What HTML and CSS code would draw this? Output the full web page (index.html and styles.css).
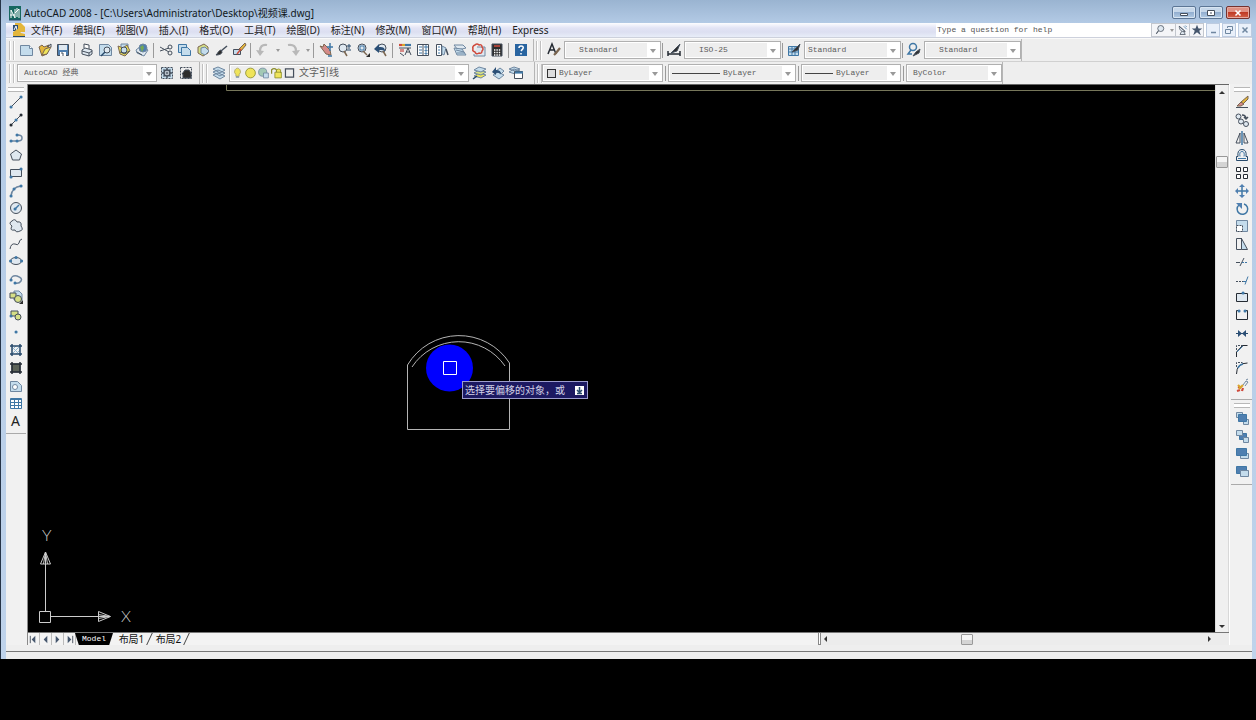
FILE: index.html
```html
<!DOCTYPE html>
<html lang="zh-CN">
<head>
<meta charset="utf-8">
<title>AutoCAD 2008</title>
<link rel="stylesheet" href="styles.css">
</head>
<body>
<div class="window">
  <header class="titlebar">
    <svg class="icon logo" viewBox="0 0 16 16"><path class="fill-teal none" d="M2 1h12v14H2z"/><path class="white" d="M4 13V5l4 8V4m0 4l4-4v9M3 10h5m2-7v9"/><path class="navy" d="M2 15h12"/></svg>
    <h1 class="title">AutoCAD 2008 - [C:\Users\Administrator\Desktop\视频课.dwg]</h1>
    <div class="winbtns">
      <button class="winbtn" aria-label="最小化"><svg viewBox="0 0 12 8"><path class="fill-white" d="M2.500 4.500h7v2h-7z"/></svg></button>
      <button class="winbtn" aria-label="还原"><svg viewBox="0 0 12 8"><path class="fill-white" d="M2.500 1.500h7v5h-7z"/><path d="M5 4h2"/></svg></button>
      <button class="winbtn close" aria-label="关闭"><svg viewBox="0 0 12 8"><path class="white heavy" d="M3.500 1.500l5 5m0-5l-5 5"/></svg></button>
    </div>
  </header>

  <div class="frame">
  <nav class="menubar">
    <svg class="icon doc" viewBox="0 0 16 16"><path class="fill-gold none" d="M4 1h6l4 4v5H4z"/><path class="fill-navy none" d="M2 3h5v6H2z"/><path class="white" d="M3 8l2-4 1 4"/><path class="fill-gold none" d="M2 14V10l5-3 3 4 4 1v2z"/><path class="navy" d="M2 14.500h12"/></svg>
    <button>文件(F)</button><button>编辑(E)</button><button>视图(V)</button><button>插入(I)</button><button>格式(O)</button><button>工具(T)</button><button>绘图(D)</button><button>标注(N)</button><button>修改(M)</button><button>窗口(W)</button><button>帮助(H)</button><button>Express</button>
    <div class="help">
      <input type="text" aria-label="帮助搜索" placeholder="Type a question for help">
      <button class="hbtn wide" aria-label="搜索"><svg class="icon" viewBox="0 0 16 16"><circle class="fill-pale" cx="9" cy="6" r="4"/><path class="heavy" d="M6 9l-3 4"/></svg><i class="tri"></i></button>
      <button class="hbtn" aria-label="通讯中心"><svg class="icon" viewBox="0 0 16 16"><path class="fill-pale" d="M3 3c0 5 3 8 8 7zM3 3l8 7M6 10l-2 4h7l-2-4"/><path class="blue" d="M9 3l4 4M11 2l2 2"/></svg></button>
      <button class="hbtn" aria-label="收藏夹"><svg class="icon" viewBox="0 0 16 16"><path class="fill-slate none" d="M8 1l2 5h5l-4 3 2 6-5-4-5 4 2-6-4-3h5z"/></svg></button>
      <div class="mdi">
        <button class="mbtn" aria-label="最小化图形"><svg viewBox="0 0 12 12"><path class="slate heavy" d="M4 8.500h5"/></svg></button>
        <button class="mbtn" aria-label="还原图形"><svg viewBox="0 0 12 12"><path class="slate" d="M4.500 4V2.500h5v4H8M2.500 5.500h5v4h-5z"/></svg></button>
        <button class="mbtn" aria-label="关闭图形"><svg viewBox="0 0 12 12"><path class="slate heavy" d="M3.500 3.500l5 5m0-5l-5 5"/></svg></button>
      </div>
    </div>
  </nav>

  <div class="toolrow">
    <div class="toolbar standard">
      <i class="grip"></i>
      <div class="group three">
        <button aria-label="新建"><svg class="icon" viewBox="0 0 16 16"><path class="fill-sky slate" d="M2.500 3.500h9l3 3v7h-12z"/><path class="fill-white slate" d="M11.500 3.500v3h3"/></svg></button>
        <button aria-label="打开"><svg class="icon" viewBox="0 0 16 16"><path class="fill-gold brown" d="M2 5l3-2 2 2 5-2-2 9-5 2z"/><path class="fill-yellow brown" d="M5 13l3-6 6-2-4 7z"/><path d="M10 5l4-3m0 3V2"/></svg></button>
        <button aria-label="保存"><svg class="icon" viewBox="0 0 16 16"><path class="fill-blue" d="M2.500 2.500h11v11h-11z"/><path class="fill-pale none" d="M4 3h8v5H4z"/><path class="fill-white none" d="M5 10h6v4H5z"/><path d="M6 11h2v3"/></svg></button>
      </div>
      <i class="sep"></i>
      <div class="group four">
        <button aria-label="打印"><svg class="icon" viewBox="0 0 16 16"><path class="fill-white" d="M5 6V2l5 1v4"/><path class="fill-pale" d="M3 8l3-2 7 2v4l-3 2-7-2z"/><path d="M3 9l7 2 3-2m-3 2v3"/></svg></button>
        <button aria-label="打印预览"><svg class="icon" viewBox="0 0 16 16"><path class="fill-sky slate" d="M2.500 2.500h9l3 3v8h-12z"/><circle class="fill-pale" cx="10" cy="8" r="3"/><path class="navy heavy" d="M8 10l-4 4"/></svg></button>
        <button aria-label="发布"><svg class="icon" viewBox="0 0 16 16"><path class="fill-sky slate" d="M5 2h7v5H5z"/><path class="fill-yellow brown" d="M2 4l5 2 4-3 3 6-5 5-5-2z"/><circle class="fill-sky" cx="8" cy="8" r="3"/><path d="M4 10l5 2 4-3"/></svg></button>
        <button aria-label="三维DWF"><svg class="icon" viewBox="0 0 16 16"><path class="fill-pale slate" d="M2 8l5-4 7 4-4 6-7-3z"/><circle class="fill-blue slate" cx="9" cy="6" r="4"/><path class="fill-green none" d="M6 5l3-2 1 3-2 4z"/><path d="M3 10l5 3"/></svg></button>
      </div>
      <i class="sep"></i>
      <div class="group five">
        <button aria-label="剪切"><svg class="icon" viewBox="0 0 16 16"><path d="M2 5l9 5M2 9l9-3"/><circle cx="12" cy="5" r="2"/><circle cx="12" cy="11" r="2"/></svg></button>
        <button aria-label="复制"><svg class="icon" viewBox="0 0 16 16"><path class="fill-sky blue" d="M2.500 2.500h8v8h-8z"/><path class="fill-sky blue" d="M5.500 5.500h6l3 3v5h-9z"/></svg></button>
        <button aria-label="粘贴"><svg class="icon" viewBox="0 0 16 16"><path class="fill-lime brown" d="M3 5l6-3 4 3v6l-5 3-5-3z"/><path class="fill-sky slate" d="M6 6l4-1 4 4-4 4-4-2z"/></svg></button>
        <button aria-label="特性匹配"><svg class="icon" viewBox="0 0 16 16"><path class="heavy" d="M14 4l-6 5"/><path class="fill-dark" d="M8 8c-2 0-3 3-5 5 3 0 6-1 6-3z"/></svg></button>
        <button aria-label="块编辑器"><svg class="icon" viewBox="0 0 16 16"><path class="fill-sky" d="M2.500 7.500h7v5h-7z"/><path class="fill-gold brown" d="M14 1l-6 6 2 2 5-6z"/><path class="red heavy" d="M6 12l4-5"/></svg></button>
      </div>
      <i class="sep"></i>
      <div class="group undo">
        <button aria-label="放弃"><svg class="icon" viewBox="0 0 16 16"><path class="gray bold" d="M12 3C7 2 5 5 5 9"/><path class="fill-gray none" d="M1 8l8 1-4 5z"/></svg></button><i class="tri light"></i>
        <button aria-label="重做"><svg class="icon" viewBox="0 0 16 16"><path class="gray bold" d="M3 3c6-1 8 2 8 6"/><path class="fill-gray none" d="M7 9l8-1-4 6z"/></svg></button><i class="tri light"></i>
      </div>
      <i class="sep"></i>
      <div class="group four">
        <button aria-label="平移"><svg class="icon" viewBox="0 0 16 16"><path class="fill-rose brown" d="M2 4l3 1 1-3 6 6 1 5-5-1z"/><path class="blue heavy" d="M12 1v8M9 5h6M10 14h4"/></svg></button>
        <button aria-label="缩放"><svg class="icon" viewBox="0 0 16 16"><circle class="fill-pale" cx="7" cy="6" r="4"/><path class="brown heavy" d="M8 9l3 5"/><path class="navy" d="M13 2v5m-2-3h4m-4 4h4"/></svg></button>
        <button aria-label="窗口缩放"><svg class="icon" viewBox="0 0 16 16"><circle class="fill-pale" cx="7" cy="6" r="4"/><path class="blue" d="M5 4h4v4H5z"/><path class="brown heavy" d="M8 9l4 4"/><path class="fill-dark none" d="M15 11v4h-4z"/></svg></button>
        <button aria-label="缩放上一个"><svg class="icon" viewBox="0 0 16 16"><circle class="fill-pale" cx="9" cy="6" r="4"/><path class="brown heavy" d="M10 9l3 5"/><path class="fill-navy none" d="M1 7l5-5v3c5 0 6 1 6 5-1-2-3-2-6-2v3z"/></svg></button>
      </div>
      <i class="sep"></i>
      <div class="group six">
        <button aria-label="特性"><svg class="icon" viewBox="0 0 16 16"><path class="red bold" d="M2 3h3"/><path class="gold bold" d="M5 3h3"/><path class="blue bold" d="M8 3h6"/><path d="M2 6h12M3 9h4M3 11l4 3M8 13l3-7 3 7m-5-3h4"/><path class="fill-rose none" d="M3 7h4v3H3z"/></svg></button>
        <button aria-label="设计中心"><svg class="icon" viewBox="0 0 16 16"><path class="fill-white" d="M2.500 2.500h11v11h-11z"/><path d="M8 2v12"/><path class="blue" d="M4 5h3M4 8h3M4 11h3M10 4h2v2h-2zM10 8h2v1h-2zM10 11h2v1h-2z"/></svg></button>
        <button aria-label="工具选项板"><svg class="icon" viewBox="0 0 16 16"><path class="fill-white" d="M2.500 2.500h5v11h-5z"/><path class="blue" d="M4 5h2M4 8h2M4 11h2"/><path class="fill-sky slate" d="M8 4l4 2-2 7-2-1z"/><path class="heavy" d="M12 7l2 6"/></svg></button>
        <button aria-label="图纸集管理器"><svg class="icon" viewBox="0 0 16 16"><path class="fill-pale slate" d="M2 3h9l3 3-8 2z"/><path class="fill-sky slate" d="M2 6l8 1 4 6H5z"/><path class="slate" d="M4 8l8 2M5 11h8"/></svg></button>
        <button aria-label="标记集"><svg class="icon" viewBox="0 0 16 16"><path class="fill-pale slate" d="M6 5h8v9H3v-2"/><path class="red heavy" d="M4 3q2-2 4 0 3-1 3 2 2 2 0 4 0 3-3 2-3 2-4-1-3-1-2-3-1-3 2-4z"/></svg></button>
        <button aria-label="快速计算器"><svg class="icon" viewBox="0 0 16 16"><path class="fill-dark" d="M3 2h10v12H3z"/><path class="red heavy" d="M5 4h6"/><path class="white dots" d="M5 8h7M5 10.500h7M5 13h7"/></svg></button>
      </div>
      <i class="sep"></i>
      <button aria-label="帮助"><svg class="icon" viewBox="0 0 16 16"><path class="fill-help none" d="M2 2h12v12H2z"/><path class="white heavy" d="M6 6q0-2 2-2 3 0 2 2.500L8 9M8 11v1.500"/></svg></button>
    </div>
    <div class="toolbar styles">
      <i class="grip"></i>
      <svg class="icon" viewBox="0 0 16 16"><path class="ink heavy" d="M2 12L6 2l4 10M4 8h5"/><path class="brown bold" d="M14 6l-4 5-2 2"/></svg>
      <label class="combo"><select class="inset" aria-label="文字样式"><option>Standard</option></select><i class="tri"></i></label>
      <i class="sep"></i>
      <svg class="icon" viewBox="0 0 16 16"><path class="ink heavy" d="M2 9v5M14 9v5M2 12h12"/><path class="fill-dark" d="M14 2l-5 5-4 4 6-2z"/></svg>
      <label class="combo"><select class="inset" aria-label="标注样式"><option>ISO-25</option></select><i class="tri"></i></label>
      <i class="sep"></i>
      <svg class="icon" viewBox="0 0 16 16"><path class="fill-sky blue" d="M2.500 4.500h10v9h-10z"/><path class="blue" d="M2 7h11M2 10h11M6 4v10M9 4v10"/><path class="fill-dark" d="M14 2l-4 4-4 4 6-2z"/></svg>
      <label class="combo"><select aria-label="表格样式"><option>Standard</option></select><i class="tri"></i></label>
      <i class="sep"></i>
      <svg class="icon" viewBox="0 0 16 16"><circle class="blue heavy" cx="7" cy="5" r="3.500"/><path class="blue heavy" d="M5 8l-3 4h4"/><path class="fill-dark" d="M14 7l-4 3-3 4 6-3z"/></svg>
      <label class="combo"><select class="inset" aria-label="多重引线样式"><option>Standard</option></select><i class="tri"></i></label>
    </div>
  </div>

  <div class="toolrow second">
    <div class="toolbar workspace">
      <i class="grip"></i>
      <label class="combo space"><select aria-label="工作空间"><option>AutoCAD 经典</option></select><i class="tri"></i></label>
      <div class="group two">
        <button aria-label="工作空间设置"><svg class="icon" viewBox="0 0 16 16"><path class="fill-sky dash" d="M2.500 2.500h11v11h-11z"/><path class="heavy" d="M8 3v10M3 8h10M4.500 4.500l7 7M11.500 4.500l-7 7"/><circle class="fill-pale heavy" cx="8" cy="8" r="3"/><circle class="fill-white" cx="8" cy="8" r="1"/></svg></button>
        <button aria-label="我的工作空间"><svg class="icon" viewBox="0 0 16 16"><path class="dash" d="M2.500 2.500h11v11h-11z"/><path class="fill-dark" d="M4 9l3-4h4l2 3v5H5V9z"/></svg></button>
      </div>
    </div>
    <div class="toolbar layers">
      <i class="grip"></i>
      <button aria-label="图层特性管理器"><svg class="icon" viewBox="0 0 16 16"><path class="fill-sky slate" d="M2 10l5-2 7 3-5 3zM2 7l5-2 7 3-5 3zM2 4l5-2 7 3-5 3z"/></svg></button>
      <label class="combo layer">
        <span class="states">
          <svg class="icon" viewBox="0 0 16 16"><path class="fill-yellow light" d="M6 10Q3 7 5 4q3-4 6 0 2 3-1 6v2H6z"/><path class="slate heavy" d="M6 13h4"/></svg>
          <svg class="icon" viewBox="0 0 16 16"><circle class="fill-yellow olive" cx="8" cy="8" r="6"/></svg>
          <svg class="icon" viewBox="0 0 16 16"><circle class="fill-mint slate" cx="7" cy="7" r="5"/><path class="fill-sky slate" d="M8 8h6v6H8z"/></svg>
          <svg class="icon" viewBox="0 0 16 16"><path class="olive heavy" d="M2 9V4q3-3 6 0v3"/><path class="fill-yellow olive" d="M6 7h8v7H6zM8 7V4q3-2 5 0v4"/></svg>
          <svg class="icon" viewBox="0 0 16 16"><path class="heavy" d="M3 3h10v10H3z"/></svg>
        </span>
        <select class="cjk" aria-label="图层"><option>文字引线</option></select><i class="tri"></i>
      </label>
      <div class="group three">
        <button aria-label="置为当前"><svg class="icon" viewBox="0 0 16 16"><path class="fill-yellow slate" d="M3 11l5-3 7 2-5 3z"/><path class="fill-lime slate" d="M3 8l5-3 7 2-5 3z"/><path class="fill-sky slate" d="M3 5l5-3 7 2-5 3z"/><path class="navy heavy" d="M2 14l4-3"/></svg></button>
        <button aria-label="上一个图层"><svg class="icon" viewBox="0 0 16 16"><path class="fill-sky slate" d="M3 10l5-3 6 3-5 4zM6 6l4-3 4 3-3 3z"/><path class="fill-navy none" d="M2 7l4-5v3q5 0 5 4-2-2-5-1v2z"/></svg></button>
        <button aria-label="图层状态"><svg class="icon" viewBox="0 0 16 16"><path class="fill-sky slate" d="M1 7l5-3 6 2-5 3zM1 4l5-2 6 2-5 2z"/><path class="fill-white" d="M6.500 6.500h8v7h-8z"/><path class="blue bold" d="M7 7.500h8"/></svg></button>
      </div>
    </div>
    <div class="toolbar props">
      <i class="grip"></i>
      <label class="combo color"><i class="swatch"></i><select aria-label="颜色"><option>ByLayer</option></select><i class="tri"></i></label>
      <i class="sep"></i>
      <label class="combo ltype"><i class="line"></i><select aria-label="线型"><option>ByLayer</option></select><i class="tri"></i></label>
      <i class="sep"></i>
      <label class="combo lweight"><i class="line"></i><select aria-label="线宽"><option>ByLayer</option></select><i class="tri"></i></label>
      <i class="sep"></i>
      <label class="combo plot"><select aria-label="打印样式"><option>ByColor</option></select><i class="tri"></i></label>
    </div>
  </div>

  <div class="work">
    <aside class="side left">
      <i class="hgrip"></i>
      <div class="stack draw">
        <button aria-label="直线"><svg class="icon" viewBox="0 0 16 16"><path d="M3 13L13 3"/><path class="blue dot" d="M3 13h.1M13 3h.1"/></svg></button>
        <button aria-label="构造线"><svg class="icon" viewBox="0 0 16 16"><path d="M3 13L13 3"/><path class="ink dot" d="M3 13h.1M13 3h.1"/><path class="blue dot" d="M8 8h.1"/></svg></button>
        <button aria-label="多段线"><svg class="icon" viewBox="0 0 16 16"><path class="slate heavy" d="M3 12h7q4 0 4-3t-4-3"/><path class="blue dot" d="M3 12h.1M9 12h.1M9 6h.1"/></svg></button>
        <button aria-label="正多边形"><svg class="icon" viewBox="0 0 16 16"><path class="fill-pale" d="M8 3l5.500 4-2 6h-7l-2-6z"/></svg></button>
        <button aria-label="矩形"><svg class="icon" viewBox="0 0 16 16"><path class="fill-pale" d="M2.500 4.500h11v7h-11z"/><path class="blue dot" d="M3 12h.1M13 4h.1"/></svg></button>
        <button aria-label="圆弧"><svg class="icon" viewBox="0 0 16 16"><path class="slate heavy" d="M3 13Q4 4 13 3"/><path class="blue dot" d="M3 13h.1M6 6h.1M13 3h.1"/></svg></button>
        <button aria-label="圆"><svg class="icon" viewBox="0 0 16 16"><circle class="fill-pale" cx="8" cy="8" r="5.500"/><path class="blue heavy" d="M7 9l4-4"/><path class="blue dot" d="M7 9h.1"/></svg></button>
        <button aria-label="修订云线"><svg class="icon" viewBox="0 0 16 16"><path class="fill-pale" d="M4 3q3-3 5 1 5-1 4 4 3 4-1 5-4 2-5-1-6 1-3-4-4-3 0-5z"/></svg></button>
        <button aria-label="样条曲线"><svg class="icon" viewBox="0 0 16 16"><path d="M2 13q1-6 5-5 3 2 4-1 0-3 3-4"/></svg></button>
        <button aria-label="椭圆"><svg class="icon" viewBox="0 0 16 16"><ellipse class="fill-pale" cx="8" cy="8" rx="5.500" ry="3.500"/><path class="blue dot" d="M2.500 8h.1M8 4.500h.1M13.500 8h.1"/></svg></button>
        <button aria-label="椭圆弧"><svg class="icon" viewBox="0 0 16 16"><path class="slate heavy" d="M3 9q0-5 6-4 6 2 4 5-2 3-6 2"/><path class="blue dot" d="M3 9h.1M7 12h.1"/></svg></button>
        <button aria-label="插入块"><svg class="icon" viewBox="0 0 16 16"><path class="fill-sky slate" d="M6 2h5l3 3v6H6z"/><path class="fill-lime" d="M2 4h6v5H2z"/><circle class="fill-lime" cx="10" cy="10" r="3.500"/><path class="fill-dark none" d="M15 11v4h-4z"/></svg></button>
        <button aria-label="创建块"><svg class="icon" viewBox="0 0 16 16"><path class="fill-lime" d="M3 4h7v5H3z"/><circle class="fill-lime" cx="10" cy="10" r="3"/><path class="blue dot" d="M3 9h.1"/></svg></button>
        <button aria-label="点"><svg class="icon" viewBox="0 0 16 16"><path class="blue dot" d="M8 8h.1"/></svg></button>
        <button aria-label="图案填充"><svg class="icon" viewBox="0 0 16 16"><path class="pale" d="M4 12l8-8M4 8l4-4M8 12l4-4M4 5l7 7"/><path class="navy heavy" d="M4 2v12M12 2v12M2 4h12M2 12h12"/></svg></button>
        <button aria-label="渐变色"><svg class="icon" viewBox="0 0 16 16"><path class="fill-gradient" d="M4 4h8v8H4z"/><path class="ink heavy" d="M4 2v12M12 2v12M2 4h12M2 12h12"/></svg></button>
        <button aria-label="面域"><svg class="icon" viewBox="0 0 16 16"><path class="fill-sky slate" d="M2.500 3.500h7l4 4v6h-11z"/><circle class="fill-white slate" cx="7" cy="9" r="2.500"/></svg></button>
        <button aria-label="表格"><svg class="icon" viewBox="0 0 16 16"><path class="fill-white blue" d="M2.500 3.500h11v10h-11z"/><path class="blue" d="M2 4.500h12M2 7.500h12M2 10.500h12M6.500 4v10M10.500 4v10"/></svg></button>
        <button class="letter" aria-label="多行文字">A</button>
      </div>
    </aside>

    <main class="center">
      <div class="viewport">
        <div class="canvas">
          <svg class="drawing">
            <path class="yellow-line" d="M198.500 0V5.500H4000"/>
            <path class="entity" d="M379.500 280V344.500H481.500V278"/>
            <path class="entity" d="M379.500 280A60 60 0 0 1 481.500 278"/>
            <path class="entity" d="M384 282A56 56 0 0 1 477 281"/>
            <circle class="pointer" cx="421.500" cy="283" r="23.500"/>
            <path class="pick" d="M415.500 276.500h13v13h-13z"/>
          </svg>
          <svg class="ucs" viewBox="0 0 120 110">
            <path d="M11.500 87.500h11v11h-11zM17.500 87V28M22.500 92.500H82M17.500 28l-5 12h10zM82.500 92.500l-12-5v10zM17.500 28l-2 12M17.500 28l2 12M82 92.500l-12-2M82 92.500l-12 2"/>
            <text x="14" y="17">Y</text><text x="93" y="98">X</text>
          </svg>
          <div class="prompt"><span>选择要偏移的对象，或</span><svg viewBox="0 0 9 9"><path class="fill-white none" d="M0 0h9v9H0z"/><path class="heavy navy" d="M4.500 1v5M2 4l2.500 2.500L7 4M2 7.500h5"/></svg></div>
        </div>
        <div class="vscroll"><i class="arrow up"></i><i class="thumb"></i><i class="arrow down"></i></div>
      </div>
      <div class="tabs">
        <div class="pager">
          <button aria-label="第一个"><svg viewBox="0 0 12 12"><path d="M2.500 2v8"/><path class="fill-slate none" d="M8 2v8L4 6z"/></svg></button>
          <button aria-label="上一个"><svg viewBox="0 0 12 12"><path class="fill-slate none" d="M8 2v8L4 6z"/></svg></button>
          <button aria-label="下一个"><svg viewBox="0 0 12 12"><path class="fill-slate none" d="M4 2v8l4-4z"/></svg></button>
          <button aria-label="最后一个"><svg viewBox="0 0 12 12"><path d="M9.500 2v8"/><path class="fill-slate none" d="M4 2v8l4-4z"/></svg></button>
        </div>
        <button class="tab active">Model</button>
        <button class="tab">布局1</button>
        <button class="tab">布局2</button>
        <i class="splitter"></i>
        <div class="hscroll"><i class="arrow back"></i><i class="thumb"></i><i class="arrow next"></i></div>
      </div>
    </main>

    <aside class="side right">
      <i class="hgrip"></i>
      <div class="stack modify">
        <button aria-label="删除"><svg class="icon" viewBox="0 0 16 16"><path class="fill-gold brown" d="M14 2l-7 6 2 2 5-5z"/><path class="fill-rose brown" d="M7 8l-4 4h4l3-2z"/><path d="M2 13.500h12"/></svg></button>
        <button aria-label="复制对象"><svg class="icon" viewBox="0 0 16 16"><circle class="fill-pale" cx="4.500" cy="4.500" r="2.500"/><circle class="fill-pale" cx="12" cy="12" r="2.500"/><circle class="fill-pale" cx="7" cy="9.500" r="2.500"/><path class="heavy" d="M8 3q4 0 4 4m-2-2l2 2 2-2"/></svg></button>
        <button aria-label="镜像"><svg class="icon" viewBox="0 0 16 16"><path d="M6 3v10H2zM10 3v10h4z"/><path class="blue heavy" d="M8 1v14"/></svg></button>
        <button aria-label="偏移"><svg class="icon" viewBox="0 0 16 16"><path class="navy" d="M2.500 13.500h11v-4H12q1-7-4-7t-4 7H2.500z"/><path class="blue" d="M4 11.500h8M6 9.500q-1-5 2-5t2 5"/></svg></button>
        <button aria-label="阵列"><svg class="icon" viewBox="0 0 16 16"><path class="ink fill-white" d="M2.500 2.500h4v4h-4zM9.500 2.500h4v4h-4zM2.500 9.500h4v4h-4zM9.500 9.500h4v4h-4z"/></svg></button>
        <button aria-label="移动"><svg class="icon" viewBox="0 0 16 16"><path class="blue heavy" d="M8 3v10M3 8h10"/><path class="fill-blue none" d="M8 1l3 3H5zM8 15l3-3H5zM1 8l3-3v6zM15 8l-3-3v6z"/></svg></button>
        <button aria-label="旋转"><svg class="icon" viewBox="0 0 16 16"><path class="blue heavy" d="M5 4a5.300 5.300 0 1 0 5-1"/><path class="fill-blue none" d="M2 2h6v6z"/></svg></button>
        <button aria-label="缩放对象"><svg class="icon" viewBox="0 0 16 16"><path class="fill-sky slate" d="M2.500 2.500h11v11h-11z"/><path class="fill-white dash" d="M2.500 7.500h6v6h-6z"/></svg></button>
        <button aria-label="拉伸"><svg class="icon" viewBox="0 0 16 16"><path class="fill-sky" d="M7.500 2.500l6 11h-6z"/><path d="M7.500 2.500h-5v11h5"/><path class="dash" d="M7.500 2v11"/></svg></button>
        <button aria-label="修剪"><svg class="icon" viewBox="0 0 16 16"><path d="M2 8.500h4M6 12l4-8"/><path class="blue dash" d="M8 8.500h6"/></svg></button>
        <button aria-label="延伸"><svg class="icon" viewBox="0 0 16 16"><path class="dash" d="M2 9.500h8"/><path class="blue" d="M9 9.500h3m-1 3l3-8"/></svg></button>
        <button aria-label="打断于点"><svg class="icon" viewBox="0 0 16 16"><path class="fill-pale ink" d="M2.500 4.500h11v8h-11z"/><path class="blue dot" d="M9 4h.1"/></svg></button>
        <button aria-label="打断"><svg class="icon" viewBox="0 0 16 16"><path class="ink" d="M5 3.500H2.500v9h11v-9H11"/><path class="blue dot" d="M5 4h.1M11 4h.1"/></svg></button>
        <button aria-label="合并"><svg class="icon" viewBox="0 0 16 16"><path class="navy" d="M2 8.500h12"/><path class="fill-navy none" d="M4 5v7l4-3.500zM12 5v7L8 8.500z"/></svg></button>
        <button aria-label="倒角"><svg class="icon" viewBox="0 0 16 16"><path class="dash" d="M2.500 7V2.500h6"/><path class="ink" d="M2.500 14V9l6-6.500h5"/><path class="blue" d="M3 9l6-6"/></svg></button>
        <button aria-label="圆角"><svg class="icon" viewBox="0 0 16 16"><path class="dash" d="M2.500 7V2.500h6"/><path class="ink" d="M2.500 14q0-11 11-11"/><path class="blue heavy" d="M4 8q1-3 5-4"/></svg></button>
        <button aria-label="分解"><svg class="icon" viewBox="0 0 16 16"><path class="red bold" d="M3 13l3-1M4 9l3 1M8 13l1-3"/><path class="gold bold" d="M5 11l4-4M4 7l2 2"/><path class="slate" d="M9 7l3-4 2 1-3 4M12 2l2-1"/></svg></button>
      </div>
      <i class="rule"></i>
      <i class="hgrip"></i>
      <div class="stack order">
        <button aria-label="前置"><svg class="icon" viewBox="0 0 16 16"><path class="fill-sky slate" d="M2.500 2.500h6v5h-6zM9.500 9.500h5v5h-5z"/><path class="fill-blue blue" d="M4.500 4.500h8v7h-8z"/></svg></button>
        <button aria-label="后置"><svg class="icon" viewBox="0 0 16 16"><path class="fill-blue blue" d="M5.500 5.500h7v6h-7z"/><path class="fill-sky slate" d="M2.500 2.500h6v5h-6zM9.500 9.500h5v5h-5z"/></svg></button>
        <button aria-label="置于对象之上"><svg class="icon" viewBox="0 0 16 16"><path class="fill-sky slate" d="M6.500 8.500h8v5h-8z"/><path class="fill-blue blue" d="M2.500 3.500h10v7h-10z"/></svg></button>
        <button aria-label="置于对象之下"><svg class="icon" viewBox="0 0 16 16"><path class="fill-blue blue" d="M2.500 3.500h10v7h-10z"/><path class="fill-sky slate" d="M6.500 7.500h8v6h-8z"/></svg></button>
      </div>
      <i class="rule"></i>
    </aside>
  </div>
  <footer class="status"></footer>
  </div>
</div>
</body>
</html>
```
FILE: styles.css
```css
* { box-sizing: border-box; }
body {
  margin: 0;
  height: 100vh;
  padding-bottom: 61px;
  display: flex;
  flex-direction: column;
  background: #000;
  color: #222;
  font: 10px/14px "Noto Sans", "Noto Sans CJK SC", sans-serif;
  overflow: hidden;
}
button { border: 0; padding: 0; margin: 0; background: none; color: inherit; font: inherit; display: flex; align-items: center; justify-content: center; }
i { flex: none; }

/* icon palette */
svg { fill: none; stroke: #454f5c; stroke-width: 1; flex: none; display: block; }
.icon { width: 16px; height: 16px; }
.heavy { stroke-width: 1.5; }
.bold { stroke-width: 2.2; }
.dot { stroke-width: 3; stroke-linecap: round; }
.dash { stroke-dasharray: 2 1; }
.dots { stroke-width: 1.4; stroke-dasharray: 1.4 1; }
.ink { stroke: #252b33; }
.navy { stroke: #27496b; }
.blue { stroke: #3f77a5; }
.pale { stroke: #8db4cf; }
.slate { stroke: #6f87a0; }
.gray { stroke: #b8b8b8; }
.light { stroke: #aaa46b; }
.olive { stroke: #8a8c2c; }
.white { stroke: #fff; }
.red { stroke: #cf4a3c; }
.gold { stroke: #d9a52e; }
.brown { stroke: #7b6650; }
.none { stroke: none; }
.fill-teal { fill: #16675f; }
.fill-navy { fill: #2b4f76; }
.fill-blue { fill: #4f7fb0; }
.fill-help { fill: #2864a0; }
.fill-sky { fill: #c4dcec; }
.fill-pale { fill: #dfe8f0; }
.fill-white { fill: #fff; }
.fill-gold { fill: #e3b63c; }
.fill-yellow { fill: #efe45a; }
.fill-lime { fill: #d5df86; }
.fill-green { fill: #75a854; }
.fill-mint { fill: #a3c9b5; }
.fill-rose { fill: #d58a88; }
.fill-dark { fill: #2c2c2c; }
.fill-gradient { fill: #5c6359; }
.fill-slate { fill: #45566d; }
.fill-gray { fill: #b8b8b8; }

.window {
  flex: 1;
  min-height: 0;
  display: flex;
  flex-direction: column;
  background: linear-gradient(#9ab4d1, #b3cae5 23px, #bfd3eb);
  border-left: 1px solid #263447;
}
.titlebar { height: 23px; flex: none; display: flex; padding: 5px 6px 0 6px; align-items: flex-start; }
.logo { margin: 0 1px 0 0; }
.title { margin: 1px 0 0; flex: 1; font-size: 10px; line-height: 14px; font-weight: 400; color: #101820; white-space: nowrap; }
.winbtns { display: flex; gap: 3px; padding-top: 1px; }
.winbtn { width: 24px; height: 13px; border: 1px solid #5c7695; border-radius: 2px; background: linear-gradient(#c7d8ea 50%, #93afd0 50%, #b3cce5); box-shadow: inset 0 0 0 1px #d8e5f2; }
.winbtn svg { width: 12px; height: 8px; }
.winbtn.close { border-color: #75322f; background: linear-gradient(#df9083 50%, #bf3a25 50%, #d3624a); box-shadow: inset 0 0 0 1px #e6aaa0; }

.frame { flex: 1; min-height: 0; margin: 0 4px 0 5px; display: flex; flex-direction: column; background: #eee; }

.menubar { height: 15px; flex: none; display: flex; align-items: center; gap: 11px; padding-left: 5px; background: linear-gradient(#fdfdff, #e3e4f5 5px, #dcdff1 9px, #e8edf8); border-bottom: 1px solid #cdd1dc; }
.menubar > button { line-height: 14px; white-space: nowrap; }
.doc { margin-right: -7px; }
.help { margin-left: auto; display: flex; height: 14px; background: #fff; }
.help input { width: 215px; border: 0; padding: 0 1px; background: #fff; outline: 0; font: 8px/14px "Liberation Mono", monospace; }
.help input::placeholder { color: #555; opacity: 1; }
.hbtn { width: 14px; border: 1px solid #c3c7ce; border-left: 0; background: #f4f5f8; }
.hbtn .icon { width: 12px; height: 12px; }
.hbtn.wide { width: 25px; gap: 4px; border-left: 1px solid #c3c7ce; }
.mdi { display: flex; gap: 2px; padding-left: 2px; }
.mbtn { width: 14px; border: 1px solid #bccbe0; background: #e9f0fa; }
.mbtn svg { width: 12px; height: 12px; }

.toolrow { display: flex; height: 23px; flex: none; align-items: stretch; border-top: 1px solid #fafafa; }
.toolrow.second { border-top-color: #d0d0d0; }
.toolbar { display: flex; align-items: center; border-right: 1px solid #b5b5b5; }
.grip { width: 5px; height: 19px; border: solid #c0c0c0; border-width: 0 1px; margin: 0 2px; box-shadow: inset 1px 0 #fff, 1px 0 #fff; }
.sep { width: 1px; height: 15px; background: #9a9a9a; margin: 0 2px; }
.standard { width: 528px; padding-left: 1px; }
.standard .grip { margin-right: 4px; }
.standard .sep { margin: 0 4px 0 3px; }
.styles .grip { margin-right: 3px; }
.styles .sep { margin: 0 1px; }
.props .grip { margin-right: 0; }
.group { display: flex; justify-content: space-between; flex: none; }
.group.two { width: 35px; }
.group.three { width: 53px; }
.group.four { width: 71px; }
.group.five { width: 89px; }
.group.six { width: 108px; }
.group.undo { width: 55px; align-items: center; }
.tri { width: 0; height: 0; border: solid transparent; border-width: 4px 3px 0; border-top-color: #999; }
.hbtn .tri, .tri.light { border-width: 3px 2px 0; border-top-color: #999; }
.toolbar > .icon { margin: 0 2px; }

.combo { display: flex; align-items: center; width: 97px; height: 18px; border: 1px solid #b0b0b0; background: #eee; box-shadow: inset 0 0 0 1px #fff; position: relative; }
.combo::before { content: ""; position: absolute; right: 1px; top: 1px; bottom: 1px; width: 12px; background: #fff; }
.combo .tri { position: absolute; right: 4px; top: 7px; }
.combo select { appearance: none; flex: 1; min-width: 0; height: 16px; padding: 0 14px 0 3px; border: 0; border-radius: 0; background: none; color: #5c5c5c; font: 8px/16px "Liberation Mono", "Noto Sans CJK SC", monospace; }
.combo select.inset { padding-left: 14px; }
.combo select.cjk { padding-top: 1px; font-size: 10px; line-height: 15px; }

.workspace { width: 194px; padding-left: 1px; }
.workspace .combo { width: 140px; margin-left: 1px; }
.workspace .combo select { padding-left: 6px; }
.workspace .group { margin-left: 2px; }
.layers { width: 335px; }
.layers > button { margin: 0 2px; }
.combo.layer { width: 240px; }
.states { display: flex; padding-left: 1px; }
.states .icon { width: 13px; height: 14px; }
.layers .group { margin-left: 2px; }
.swatch { width: 9px; height: 9px; border: 1px solid #333; background: #ddd; margin-left: 4px; }
.combo.color { width: 121px; }
.combo.ltype { width: 128px; }
.combo.lweight { width: 100px; }
.combo.plot { width: 96px; }
.combo.plot select { padding-left: 6px; }
.line { height: 1px; width: 48px; background: #444; margin-left: 3px; }
.lweight .line { width: 28px; }

.work { flex: 1; min-height: 0; display: flex; }
.side { display: flex; flex-direction: column; align-items: center; background: #f1f1f1; flex: none; }
.left { width: 22px; padding-right: 2px; border-right: 1px solid #8a8a8a; }
.right { width: 23px; padding-left: 1px; border-left: 1px solid #fff; }
.hgrip { width: 16px; height: 5px; margin: 3px 0 2px; border: solid #b8b8b8; border-width: 1px 0; background: #fff; }
.stack { display: flex; flex-direction: column; justify-content: space-between; flex: none; }
.draw { height: 335px; }
.modify { height: 300px; }
.order { height: 69px; }
.left::after { content: ""; width: 20px; height: 1px; background: #aaa; margin-top: 4px; }
.rule { width: 100%; height: 1px; background: #aaa; margin-top: 5px; }
.letter { width: 16px; height: 16px; font: 14px/16px "Noto Sans", sans-serif; color: #222; }

.center { flex: 1; min-width: 0; display: flex; flex-direction: column; border-top: 1px solid #666; }
.viewport { flex: 1; min-height: 0; display: flex; }
.canvas { flex: 1; min-width: 0; background: #000; position: relative; overflow: hidden; }
.drawing { position: absolute; inset: 0; width: 100%; height: 100%; }
.yellow-line { stroke: #77775a; }
.entity { stroke: #b4b4b4; }
.pointer { fill: #00f; stroke: none; }
.pick { stroke: #fff; }
.ucs { position: absolute; left: 0; bottom: -2px; width: 120px; height: 110px; stroke: #ccc; }
.ucs text { font: 300 16px "Lato", sans-serif; fill: #ccc; stroke: none; }
.prompt { position: absolute; left: 434px; top: 296px; width: 126px; height: 18px; display: flex; align-items: center; justify-content: space-between; padding: 0 3px 0 2px; border: 1px solid #9c9ccd; background: #1c1961; color: #d2d2e6; white-space: nowrap; }
.prompt svg { width: 9px; height: 9px; }
.vscroll { width: 14px; flex: none; display: flex; flex-direction: column; align-items: center; padding: 6px 0 4px; background: #f0f0f0; border-left: 1px solid #ddd; border-right: 1px solid #d8d8d8; }
.arrow { width: 0; height: 0; border: 3px solid transparent; }
.up { border-top: 0; border-bottom-color: #333; }
.down { border-bottom: 0; border-top-color: #333; margin-top: auto; }
.back { border-left: 0; border-right-color: #333; }
.next { border-right: 0; border-left-color: #333; margin-left: auto; }
.thumb { width: 12px; height: 12px; border: 1px solid #999; border-radius: 1px; background: linear-gradient(#f5f5f5 50%, #d4d4d4 50%); }
.vscroll .thumb { margin-top: 62px; }

.tabs { height: 13px; flex: none; display: flex; border-top: 1px solid #777; background: #f3f3f3; }
.pager { display: flex; width: 47px; }
.pager button { flex: 1; border-right: 1px solid #bbb; }
.pager svg { width: 11px; height: 11px; }
.tab { width: 37px; height: 12px; position: relative; line-height: 12px; color: #111; }
.tab.active { width: 38px; background: #000; color: #fff; clip-path: polygon(0 0, 100% 0, 90% 100%, 10% 100%); font: 8px/12px "Liberation Mono", monospace; }
.tab:not(.active)::after { content: ""; position: absolute; right: 0; top: 0; height: 12px; width: 1px; background: #444; transform: skewX(-25deg); }
.splitter { width: 3px; margin-left: auto; border: 1px solid #888; border-top: 0; background: #fff; }
.hscroll { width: 34%; display: flex; align-items: center; padding: 0 18px 0 3px; background: #ececec; }
.hscroll .thumb { height: 11px; margin-left: 134px; }

.status { flex: none; height: 14px; background: linear-gradient(#eee 6px, #777 6px, #777 7px, #eee 7px); }
```
